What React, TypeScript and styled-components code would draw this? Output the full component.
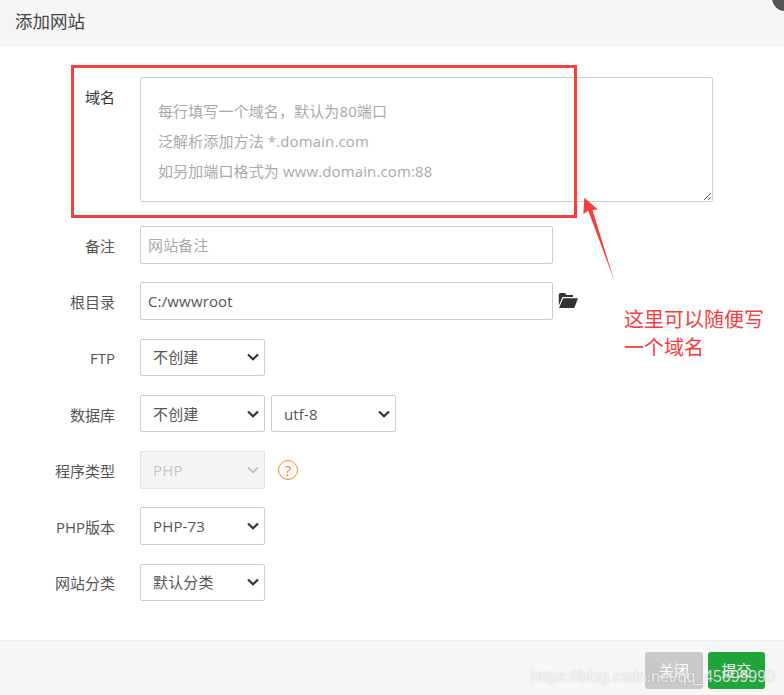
import React, { ReactElement } from 'react'
import styled, { createGlobalStyle } from 'styled-components'

const GlobalStyle = createGlobalStyle`
  html, body {
    margin: 0;
    padding: 0;
    background: #fff;
  }
  * {
    box-sizing: border-box;
  }
`

const FONT = `"Open Sans", "Noto Sans CJK SC", sans-serif`

const Dialog = styled.div`
  position: relative;
  display: flex;
  flex-direction: column;
  width: 784px;
  height: 695px;
  overflow: hidden;
  font-family: ${FONT};
  color: #555;
`

const Header = styled.div`
  flex: none;
  height: 46px;
  padding: 0 15px 4px;
  display: flex;
  align-items: center;
  font-size: 17.5px;
  color: #444;
  background: #f6f6f6;
  border-bottom: 1px solid #eee;
`

const CornerClose = styled.div`
  position: absolute;
  top: -15px;
  right: -14px;
  width: 26px;
  height: 26px;
  border-radius: 50%;
  background: #555;
  box-shadow: 0 0 0 1px #fff;
`

const Form = styled.div`
  flex: 1;
  padding-top: 31px;
  display: flex;
  flex-direction: column;
  gap: 18.3px;
`

const Row = styled.div<{ $spaced?: boolean }>`
  display: flex;
  align-items: ${p => (p.$spaced ? 'flex-start' : 'center')};
  gap: 25px;
  min-height: 38px;
  margin-bottom: ${p => (p.$spaced ? '5.4px' : '0')};
`

const Label = styled.div<{ $top?: boolean }>`
  flex: none;
  width: 115px;
  text-align: right;
  font-size: 15px;
  line-height: 20px;
  padding-top: ${p => (p.$top ? '10px' : '2px')};
  color: ${p => (p.$top ? '#333' : '#555')};
`

const DomainArea = styled.textarea`
  display: block;
  width: 573px;
  height: 125px;
  margin: 0;
  padding: 18px 17px;
  border: 1px solid #ccc;
  border-radius: 2px;
  outline: none;
  font-family: ${FONT};
  font-size: 15px;
  line-height: 30px;
  letter-spacing: 0.12px;
  color: #555;

  &::placeholder {
    color: #a9a9a9;
    opacity: 1;
  }
`

const TextInput = styled.input`
  display: block;
  width: 413px;
  height: 38px;
  padding: 0 7px;
  border: 1px solid #ccc;
  border-radius: 2px;
  outline: none;
  font-family: ${FONT};
  font-size: 15px;
  letter-spacing: 0.15px;
  color: #555;

  &::placeholder {
    color: #a9a9a9;
    opacity: 1;
  }
`

const FolderIcon = styled.svg`
  flex: none;
  width: 20px;
  height: 15px;
  margin-left: -20px;
  fill: #333;
`

const SelectBox = styled.div`
  position: relative;
  flex: none;
  width: 125px;
  height: 37.5px;
`

const Select = styled.select`
  display: block;
  width: 100%;
  height: 100%;
  padding: 0 24px 0 12px;
  appearance: none;
  background-color: #fff;
  border: 1px solid #ccc;
  border-radius: 2px;
  outline: none;
  font-family: ${FONT};
  font-size: 15px;
  letter-spacing: 0.15px;
  color: #555;

  &:disabled {
    background-color: #f5f5f5;
    border-color: #e2e2e2;
    color: #c6c6be;
    opacity: 1;
  }
`

const Chevron = styled.svg<{ $muted?: boolean }>`
  position: absolute;
  top: 50%;
  right: 6px;
  width: 12px;
  height: 8px;
  margin-top: -4px;
  pointer-events: none;
  fill: none;
  stroke: ${p => (p.$muted ? '#c6c6be' : '#333')};
  stroke-width: 2.2;
`

const SelectPair = styled.div`
  display: flex;
  gap: 6px;
`

const HelpIcon = styled.span`
  flex: none;
  width: 20px;
  height: 20px;
  margin-left: -12px;
  border: 1px solid #f5871f;
  border-radius: 50%;
  color: #f5871f;
  font-size: 15px;
  line-height: 18px;
  text-align: center;
`

const Footer = styled.div`
  flex: none;
  height: 55px;
  padding: 11px 19px 0 0;
  display: flex;
  justify-content: flex-end;
  gap: 5px;
  background: #f6f8f8;
  border-top: 1px solid #eee;
`

const FooterButton = styled.button<{ $primary?: boolean }>`
  width: ${p => (p.$primary ? '57px' : '58px')};
  height: 37px;
  padding: 0 0 3px;
  border: none;
  border-radius: 3px;
  font-family: ${FONT};
  font-size: 15px;
  color: #fff;
  background: ${p => (p.$primary ? '#20a53a' : '#c9c9c9')};
`

const RedFrame = styled.div`
  position: absolute;
  left: 71px;
  top: 65px;
  width: 506px;
  height: 153px;
  border: 3px solid #f93c3c;
`

const ArrowMark = styled.svg`
  position: absolute;
  left: 580px;
  top: 194px;
  width: 38px;
  height: 90px;
  fill: #f93c3c;
`

const Annotation = styled.div`
  position: absolute;
  left: 624px;
  top: 306px;
  font-size: 20px;
  line-height: 28px;
  color: #f93c3c;
`

const Watermark = styled.div`
  position: absolute;
  left: 531px;
  top: 668px;
  font-family: "Liberation Sans", sans-serif;
  font-size: 15.9px;
  white-space: nowrap;
  pointer-events: none;
  color: rgba(255, 255, 255, 0.72);
  text-shadow: 0 0 2px rgba(130, 130, 130, 0.45);
`

const Dropdown = ({ value, disabled }: { value: string; disabled?: boolean }): ReactElement => (
  <SelectBox>
    <Select disabled={disabled} defaultValue={value}>
      <option value={value}>{value}</option>
    </Select>
    <Chevron $muted={disabled} viewBox='0 0 12 8'>
      <path d='M1 1.500 6 6.300 11 1.500' />
    </Chevron>
  </SelectBox>
)

const App = (): ReactElement => (
  <>
    <GlobalStyle />
    <Dialog>
      <Header>添加网站</Header>
      <CornerClose />
      <Form>
        <Row $spaced>
          <Label $top>域名</Label>
          <DomainArea placeholder={'每行填写一个域名，默认为80端口\n泛解析添加方法 *.domain.com\n如另加端口格式为 www.domain.com:88'} />
        </Row>
        <Row>
          <Label>备注</Label>
          <TextInput placeholder='网站备注' />
        </Row>
        <Row>
          <Label>根目录</Label>
          <TextInput defaultValue='C:/wwwroot' />
          <FolderIcon viewBox='0 0 20 15'>
            <path d='M2 0h5l1.500 2H15v2H4.500L0.800 12.500V1.200Z' />
            <path d='M5.200 5.200H20L16.300 15H1Z' />
          </FolderIcon>
        </Row>
        <Row>
          <Label>FTP</Label>
          <Dropdown value='不创建' />
        </Row>
        <Row>
          <Label>数据库</Label>
          <SelectPair>
            <Dropdown value='不创建' />
            <Dropdown value='utf-8' />
          </SelectPair>
        </Row>
        <Row>
          <Label>程序类型</Label>
          <Dropdown value='PHP' disabled />
          <HelpIcon>?</HelpIcon>
        </Row>
        <Row>
          <Label>PHP版本</Label>
          <Dropdown value='PHP-73' />
        </Row>
        <Row>
          <Label>网站分类</Label>
          <Dropdown value='默认分类' />
        </Row>
      </Form>
      <Footer>
        <FooterButton>关闭</FooterButton>
        <FooterButton $primary>提交</FooterButton>
      </Footer>
      <RedFrame />
      <ArrowMark viewBox='0 0 38 90'>
        <polygon points='4.300,3.700 17.700,15.300 12.500,16 34.300,86.700 8.300,16.700 3.300,20' />
      </ArrowMark>
      <Annotation>
        这里可以随便写
        <br />
        一个域名
      </Annotation>
      <Watermark>https://blog.csdn.net/qq_45699990</Watermark>
    </Dialog>
  </>
)

export default App
